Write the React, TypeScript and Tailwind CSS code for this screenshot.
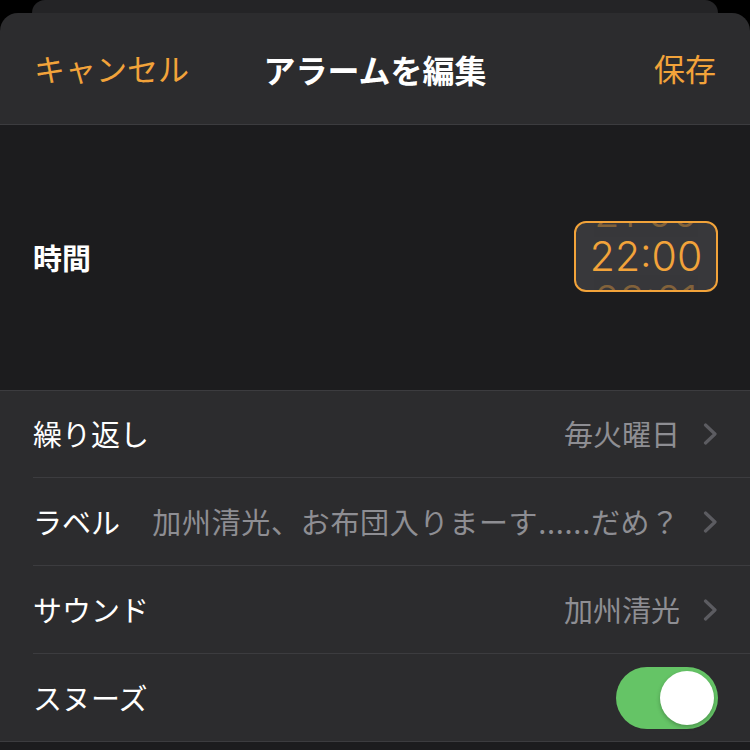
import React from "react";

const jp = { fontFamily: '"Noto Sans CJK JP", "Noto Sans", sans-serif' };

function Chevron() {
  return (
    <svg width="15" height="22" viewBox="0 0 15 22" className="ml-[23px] shrink-0">
      <path d="M2.5 2 L12 11 L2.5 20" fill="none" stroke="#5c5c61" strokeWidth="3.2" strokeLinecap="round" strokeLinejoin="round" />
    </svg>
  );
}

function Row({ label, children, h, last }: { label: string; children: React.ReactNode; h: string; last?: boolean }) {
  return (
    <div className="pl-[33px]">
      <div className={`flex items-center pr-[32px] ${h} ${last ? "" : "border-b border-[#3c3c3f]"}`}>
        <span className="text-[29px] text-white shrink-0">{label}</span>
        <div className="flex-1 flex items-center justify-end min-w-0">{children}</div>
      </div>
    </div>
  );
}

export default function App() {
  return (
    <div className="w-[750px] h-[750px] bg-black overflow-hidden" style={jp}>
      <div className="mx-[32px] h-[13px] bg-[#242426] rounded-t-[16px]" />
      <div className="bg-[#2c2c2e] rounded-t-[18px]">
        {/* header */}
        <div className="h-[112px] flex items-center justify-between px-[34px] border-b border-[#3c3c3f] relative">
          <span className="text-[31px] text-[#f2a33a]">キャンセル</span>
          <span className="absolute left-1/2 -translate-x-1/2 text-[32px] font-bold text-white">アラームを編集</span>
          <span className="text-[31px] text-[#f2a33a]">保存</span>
        </div>

        {/* time */}
        <div className="h-[266px] bg-[#1c1c1e] border-b border-[#3c3c3f] flex items-center justify-between pl-[33px] pr-[32px]">
          <span className="text-[29px] font-bold text-white">時間</span>
          <div className="w-[144px] h-[71px] mb-[3px] rounded-[12px] border-[2.5px] border-[#f2a33a] bg-[#38383b] overflow-hidden flex flex-col items-center justify-center">
            <div className="flex flex-col items-center text-[41px] leading-[44px] font-light text-[#f2a33a]" style={{ fontFamily: "Inter, Roboto, sans-serif" }}>
              <span className="opacity-40">21:00</span>
              <span>22:00</span>
              <span className="opacity-40">23:01</span>
            </div>
          </div>
        </div>

        {/* rows */}
        <Row label="繰り返し" h="h-[87px]">
          <span className="text-[29px] text-[#8e8e93]">毎火曜日</span>
          <Chevron />
        </Row>
        <Row label="ラベル" h="h-[88px]">
          <span className="text-[29px] tracking-[0.7px] text-[#8e8e93] whitespace-nowrap">加州清光、お布団入りまーす......だめ？</span>
          <Chevron />
        </Row>
        <Row label="サウンド" h="h-[88px]">
          <span className="text-[29px] text-[#8e8e93]">加州清光</span>
          <Chevron />
        </Row>
        <Row label="スヌーズ" h="h-[87px]" last>
          <div className="w-[102px] h-[62px] rounded-full bg-[#65c466] flex items-center justify-end pr-[4px]">
            <div className="w-[54px] h-[54px] rounded-full bg-white shadow-[0_2px_4px_rgba(0,0,0,0.25)]" />
          </div>
        </Row>
      </div>
      <div className="border-t border-[#3c3c3f] bg-[#1c1c1e] h-[20px]" />
    </div>
  );
}
